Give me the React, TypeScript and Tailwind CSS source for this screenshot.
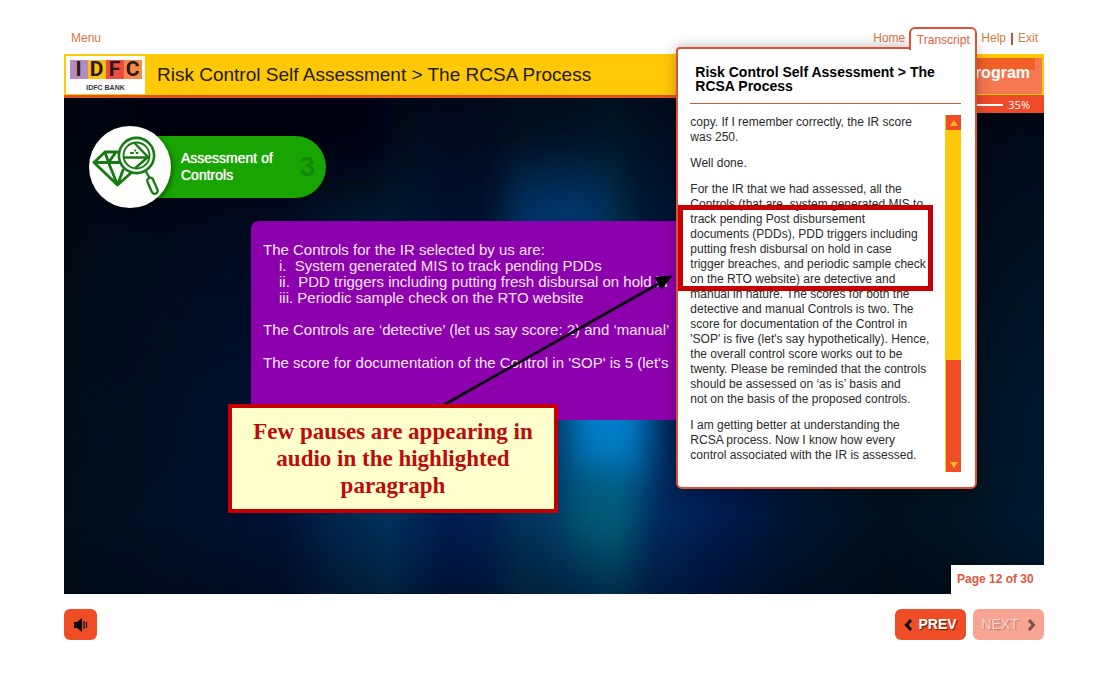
import type { ReactNode } from "react";

function Backdrop() {
  return (
    <svg className="absolute inset-0 h-full w-full" viewBox="0 0 980 496" preserveAspectRatio="none" aria-hidden="true">
      <defs>
        <linearGradient id="streaks" x1="0" x2="1" y1="0" y2="0">
          <stop offset="0" stopColor="#000e1a" />
          <stop offset="0.1" stopColor="#001028" />
          <stop offset="0.22" stopColor="#001238" />
          <stop offset="0.27" stopColor="#002650" />
          <stop offset="0.33" stopColor="#003763" />
          <stop offset="0.39" stopColor="#001d56" />
          <stop offset="0.43" stopColor="#002257" />
          <stop offset="0.47" stopColor="#003a62" />
          <stop offset="0.51" stopColor="#00406e" />
          <stop offset="0.56" stopColor="#00527c" />
          <stop offset="0.6" stopColor="#003068" />
          <stop offset="0.66" stopColor="#001e58" />
          <stop offset="0.74" stopColor="#001636" />
          <stop offset="0.84" stopColor="#00101c" />
          <stop offset="0.92" stopColor="#001524" />
          <stop offset="1" stopColor="#001d38" />
        </linearGradient>
        <linearGradient id="shade" x1="0" x2="0" y1="0" y2="1">
          <stop offset="0" stopColor="#00030c" stopOpacity="0.85" />
          <stop offset="0.25" stopColor="#00030c" stopOpacity="0.55" />
          <stop offset="0.6" stopColor="#00030c" stopOpacity="0.2" />
          <stop offset="0.85" stopColor="#00030c" stopOpacity="0.1" />
          <stop offset="1" stopColor="#00030c" stopOpacity="0.45" />
        </linearGradient>
        <filter id="soft" x="-100%" y="-100%" width="300%" height="300%">
          <feGaussianBlur stdDeviation="16 26" />
        </filter>
      </defs>
      <rect width="980" height="496" fill="url(#streaks)" />
      <rect width="980" height="496" fill="url(#shade)" />
      <rect x="445" y="80" width="100" height="110" fill="#003f82" opacity="0.7" filter="url(#soft)" />
      <rect x="80" y="-30" width="250" height="110" fill="#000108" opacity="0.8" filter="url(#soft)" />
      <rect x="507" y="270" width="76" height="110" fill="#0080cc" filter="url(#soft)" />
      <rect x="505" y="385" width="66" height="60" fill="#006478" opacity="0.8" filter="url(#soft)" />
    </svg>
  );
}

function Logo() {
  const tiles = [
    ["I", "bg-[#b48cc0]"],
    ["D", "bg-[#fbc012]"],
    ["F", "bg-[#ee4c3e]"],
    ["C", "bg-[#f58a4b]"],
  ];
  return (
    <div className="flex h-[38px] w-[79px] shrink-0 flex-col items-center bg-white pt-1">
      <div className="flex">
        {tiles.map(([letter, tone]) => (
          <span
            key={letter}
            className={`flex h-[19px] w-[18px] items-center justify-center font-[Roboto,sans-serif] text-[21px] leading-none font-bold text-[#2b1717] ${tone}`}
          >
            {letter}
          </span>
        ))}
      </div>
      <span className="mt-1 text-[7px] leading-[9px] font-bold text-[#3d3336]">IDFC BANK</span>
    </div>
  );
}

function DiamondLens() {
  return (
    <svg className="h-[82px] w-[82px]" viewBox="0 0 82 82" fill="none" stroke="#157a12" strokeLinecap="round" strokeLinejoin="round" aria-hidden="true">
      <path d="M5 36.500 16 26H41M5 36.500 28.500 59 42 47M5 36.500H30M16 26 19.500 36.500 28.500 59 34 44M19.500 36.500 27 26" strokeWidth="2.800" />
      <circle cx="47.500" cy="29.500" r="18.500" fill="#fdfefb" stroke="none" />
      <circle cx="47.500" cy="29.500" r="17.600" strokeWidth="2.600" />
      <circle cx="47.500" cy="29.500" r="13" strokeWidth="1.900" />
      <path d="M35.500 31.500H59M46 17.500 59 31 47 41.500" strokeWidth="2.400" />
      <path d="M42 27h2M47.500 27h1M46 24.500h.2" strokeWidth="2" />
      <path d="M57 45.500 60.500 52" strokeWidth="2.200" />
      <rect x="-3" y="0" width="6" height="17" rx="3" transform="translate(60 52) rotate(-24)" strokeWidth="2.300" />
    </svg>
  );
}

const transcript: string[][] = [
  ["copy. If I remember correctly, the IR score", "was 250."],
  ["Well done."],
  [
    "For the IR that we had assessed, all the",
    "Controls (that are, system generated MIS to",
    "track pending Post disbursement",
    "documents (PDDs), PDD triggers including",
    "putting fresh disbursal on hold in case",
    "trigger breaches, and periodic sample check",
    "on the RTO website) are detective and",
    "manual in nature. The scores for both the",
    "detective and manual Controls is two. The",
    "score for documentation of the Control in",
    "'SOP' is five (let's say hypothetically). Hence,",
    "the overall control score works out to be",
    "twenty. Please be reminded that the controls",
    "should be assessed on ‘as is’ basis and",
    "not on the basis of the proposed controls.",
  ],
  ["I am getting better at understanding the", "RCSA process. Now I know how every", "control associated with the IR is assessed."],
];

function TranscriptPanel() {
  return (
    <section
      aria-label="Transcript"
      className="absolute top-[20px] right-0 w-[301px] rounded-b-md rounded-tl-sm border-2 border-[#df5035] bg-white pt-4 pr-[14px] pb-[15px] pl-3 shadow-[0_0_14px_rgba(0,0,0,0.3)]"
    >
      <h2 className="border-b border-[#c95a35] pr-5 pb-[10px] pl-[5px] text-[14px] leading-[14px] font-bold text-black">
        Risk Control Self Assessment &gt; The RCSA Process
      </h2>
      <div className="mt-[11px] flex justify-between">
        <div className="flex w-[244px] flex-col gap-[11px] pb-[9px] text-[12px] leading-[15px] whitespace-nowrap text-[#2a2a2a]">
          {transcript.map((lines, i) => (
            <p key={i}>
              {lines.map((line) => (
                <span key={line} className="block">
                  {line}
                </span>
              ))}
            </p>
          ))}
        </div>
        <div className="flex w-4 shrink-0 flex-col border-l border-[#ffc907] bg-[#ffc907]">
          <button type="button" aria-label="Scroll up" className="flex h-[15px] items-center justify-center bg-[#ee4d26]">
            <svg width="8" height="6" viewBox="0 0 8 6" fill="#ffb52b" aria-hidden="true">
              <path d="M4 0 8 6H0Z" />
            </svg>
          </button>
          <div className="grow" />
          <button type="button" aria-label="Scroll down" className="flex h-[112px] items-end justify-center bg-[#ee4d26] pb-1">
            <svg width="8" height="6" viewBox="0 0 8 6" fill="#ffb52b" aria-hidden="true">
              <path d="M0 0H8L4 6Z" />
            </svg>
          </button>
        </div>
      </div>
    </section>
  );
}

function NavLink({ children }: { children: ReactNode }) {
  return (
    <a href="#" className="leading-[23px] text-[#d9773f]">
      {children}
    </a>
  );
}

function Annotation() {
  return (
    <>
      <svg className="absolute top-[270px] left-[436px] z-30" width="242" height="140" viewBox="0 0 242 140" aria-hidden="true">
        <path d="M6 136 222 14" stroke="#050008" strokeWidth="2.600" />
        <path d="M236 6 225.500 19 219 7.500Z" fill="#050008" stroke="#050008" />
      </svg>
      <div className="absolute top-[205px] left-[678px] z-30 h-[86px] w-[255px] border-[5px] border-[#c60000]" />
      <p className="absolute top-[404px] left-[228px] z-30 w-[330px] border-4 border-[#c60000] bg-[#ffffce] px-4 pt-[10px] pb-[10px] text-center font-['Liberation_Serif',serif] text-[23px] leading-[27px] font-bold text-[#bd0a0a]">
        Few pauses are appearing in audio in the highlighted paragraph
      </p>
    </>
  );
}

export default function App() {
  return (
    <div className="relative min-h-screen bg-white pr-[55px] pl-16 font-['Liberation_Sans',sans-serif]">
      <nav className="flex h-[54px] items-start justify-between pt-[27px] pr-[6px] pl-[7px] text-[12px]">
        <NavLink>Menu</NavLink>
        <div className="flex items-start">
          <NavLink>Home</NavLink>
          <div className="relative z-20 mr-1 ml-1">
            <button type="button" className="relative z-10 h-[23px] w-[68px] rounded-t-md border-2 border-b-0 border-[#df5035] bg-white text-[#e2643e]">
              Transcript
            </button>
            <TranscriptPanel />
          </div>
          <NavLink>Help</NavLink>
          <span className="mx-[5px] mt-[6px] h-3 w-[2px] bg-[#d24a35]" />
          <NavLink>Exit</NavLink>
        </div>
      </nav>

      <header className="flex h-[44px] items-start border-b-[3px] border-[#e0521d] bg-[#ffc907]">
        <div className="flex h-[41px] items-center gap-3 pl-[2px]">
          <Logo />
          <h1 className="text-[19px] leading-none text-[#241a05]">Risk Control Self Assessment &gt; The RCSA Process</h1>
        </div>
        <div className="relative z-10 ml-auto flex w-[200px] flex-col">
          <div className="mt-1 mr-[2px] mb-[2px] h-9 bg-[#f57850]">
            <div className="mr-[7px] h-3 bg-[#f26029]">
              <p className="pt-[6px] pr-[5px] text-right text-[16px] leading-[18px] font-bold text-white">Program</p>
            </div>
          </div>
          <div className="flex h-[17px] shrink-0 items-center gap-[5px] bg-[#ee4a2a] pr-[14px] font-['Open_Sans',sans-serif] text-[11px] leading-none text-white">
            <span className="ml-4 h-[2px] grow bg-white" />
            35%
          </div>
        </div>
      </header>

      <main className="relative h-[496px] overflow-hidden bg-[#000a1c]">
        <Backdrop />
        <div className="relative flex items-center pt-7 pl-[25px]">
          <div className="relative z-10 h-[82px] w-[82px] rounded-full bg-[#fdfefb] shadow-[2px_2px_5px_rgba(0,0,0,0.4)]">
            <DiamondLens />
          </div>
          <div className="-ml-10 flex h-[62px] w-[195px] items-center justify-between rounded-r-full bg-[#18a502] pr-[11px] pl-[50px]">
            <h2 className="w-[110px] text-[14px] leading-[17px] font-medium text-white [text-shadow:0_0_1px_#ffffff]">Assessment of Controls</h2>
            <span className="text-[28px] font-bold text-[#128a0a]">3</span>
          </div>
        </div>
        <div className="relative mt-[13px] mr-[80px] ml-[187px] h-[199px] overflow-hidden rounded-lg bg-[#8d00ae] px-3 pt-[21px] text-[15px] leading-[16px] whitespace-nowrap text-[#f6e6fa]">
          <p>The Controls for the IR selected by us are:</p>
          <ol className="pl-4">
            <li className="whitespace-pre">i.  System generated MIS to track pending PDDs</li>
            <li className="whitespace-pre">ii.  PDD triggers including putting fresh disbursal on hold in</li>
            <li>iii. Periodic sample check on the RTO website</li>
          </ol>
          <p className="mt-4">The Controls are ‘detective’ (let us say score: 2) and ‘manual’</p>
          <p className="mt-[17px]">The score for documentation of the Control in 'SOP' is 5 (let's</p>
        </div>
        <p className="absolute right-0 bottom-0 h-[29px] w-[93px] bg-white pl-[6px] text-[12px] leading-[29px] font-bold text-[#e0553d]">Page 12 of 30</p>
      </main>

      <footer className="flex items-center justify-between pt-[15px]">
        <button type="button" aria-label="Audio" className="flex h-[31px] w-[33px] items-center justify-center rounded-md bg-[#ee4d26]">
          <svg width="14" height="16" viewBox="0 0 14 16" aria-hidden="true">
            <path d="M0 5H3L8 1V15L3 11H0Z" fill="#0d0504" />
            <path d="M10 4V12M12.500 5V11" stroke="#0d0504" strokeWidth="1.200" />
          </svg>
        </button>
        <div className="flex gap-[7px]">
          <button type="button" className="flex h-[31px] w-[71px] items-center justify-center gap-[6px] rounded-md bg-[#ee4d26] text-[14px] font-bold text-white [text-shadow:1px_1px_1px_#5b1a0a]">
            <svg width="8" height="12" viewBox="0 0 8 12" fill="none" stroke="#0d0504" strokeWidth="3" aria-hidden="true">
              <path d="M7 1 2.500 6 7 11" />
            </svg>
            PREV
          </button>
          <button type="button" disabled className="flex h-[31px] w-[71px] items-center justify-center gap-[9px] rounded-md bg-[#f7a592] text-[14px] text-[#fbd6cc] [text-shadow:1px_1px_1px_#b87566]">
            NEXT
            <svg width="8" height="12" viewBox="0 0 8 12" fill="none" stroke="#7d5048" strokeWidth="3" aria-hidden="true">
              <path d="M1 1 5.500 6 1 11" />
            </svg>
          </button>
        </div>
      </footer>

      <Annotation />
    </div>
  );
}
